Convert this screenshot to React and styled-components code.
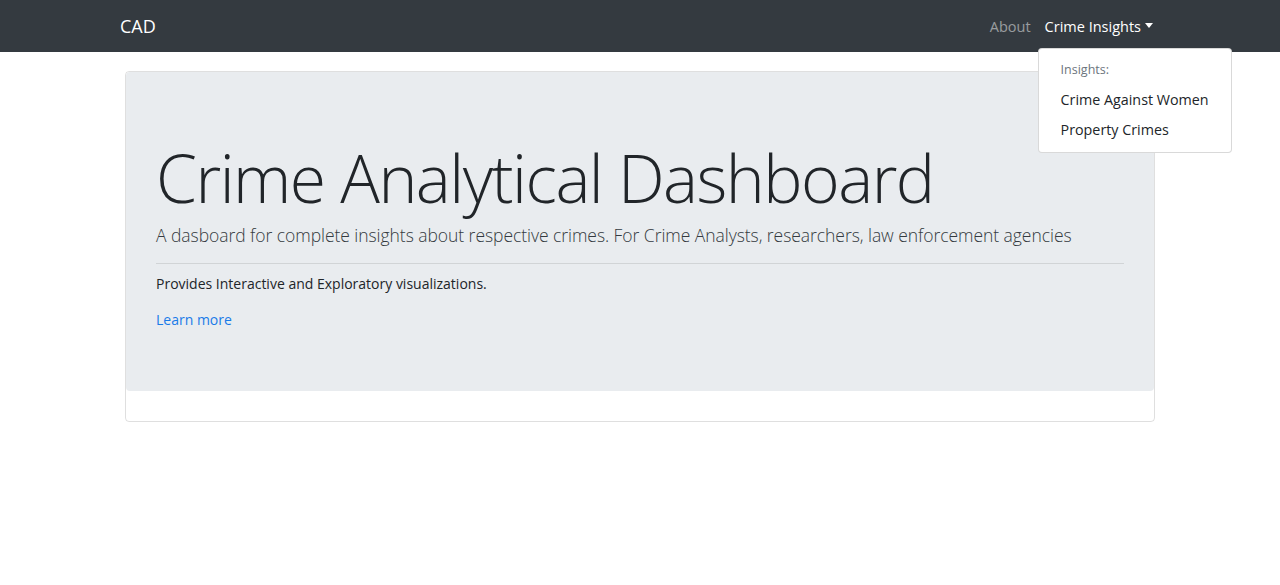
import React from "react";
import styled, { createGlobalStyle } from "styled-components";

const Global = createGlobalStyle`
  body {
    margin: 0;
    background: #fff;
    font-family: "Open Sans", "Noto Sans", sans-serif;
    color: #212529;
  }
`;

const Navbar = styled.nav`
  height: 52px;
  background: #343a40;
  display: flex;
  align-items: center;
  justify-content: space-between;
  padding: 0 120px;
`;

const Brand = styled.a`
  color: #fff;
  font-size: 18px;
  text-decoration: none;
`;

const NavList = styled.ul`
  display: flex;
  list-style: none;
  margin: 0;
  padding: 0;
`;

const NavItem = styled.li`
  position: relative;
`;

const NavLink = styled.a`
  display: flex;
  align-items: center;
  height: 36px;
  padding: 0 7px;
  font-size: 14.5px;
  color: ${(p) => (p.$active ? "#fff" : "rgba(255,255,255,.5)")};
  text-decoration: none;
`;

const Caret = styled.span`
  margin-left: 4px;
  border-top: 5px solid #fff;
  border-left: 4.5px solid transparent;
  border-right: 4.5px solid transparent;
  margin-top: -2px;
`;

const Menu = styled.div`
  position: absolute;
  top: 40px;
  left: 0;
  width: 194px;
  box-sizing: border-box;
  background: #fff;
  border: 1px solid rgba(0,0,0,.15);
  border-radius: 4px;
  padding: 7px 0;
  z-index: 10;
`;

const MenuHeader = styled.div`
  padding: 5px 22px 6px;
  line-height: 18px;
  font-size: 12.5px;
  color: #6c757d;
`;

const MenuItem = styled.a`
  display: block;
  padding: 5px 22px;
  line-height: 20px;
  font-size: 14.3px;
  white-space: nowrap;
  color: #212529;
  text-decoration: none;
`;

const Container = styled.main`
  width: 1030px;
  margin: 19px auto 0;
`;

const Card = styled.div`
  border: 1px solid rgba(0,0,0,.125);
  border-radius: 4px;
  padding-bottom: 30px;
`;

const Jumbotron = styled.section`
  background: #e9ecef;
  border-radius: 4px;
  padding: 69px 30px 61px;
`;

const Title = styled.h1`
  margin: 0 0 9px;
  font-size: 66px;
  font-weight: 300;
  line-height: 1.1;
  letter-spacing: -1.5px;
`;

const Lead = styled.p`
  margin: 0 0 16px;
  font-size: 17.5px;
  font-weight: 300;
  letter-spacing: -0.05px;
  white-space: nowrap;
  color: #343a40;
`;

const Rule = styled.hr`
  margin: 0 0 10px;
  border: 0;
  border-top: 1px solid rgba(0,0,0,.1);
`;

const Text = styled.p`
  margin: 0 0 15px;
  font-size: 14px;
`;

const Link = styled.a`
  font-size: 14px;
  color: #1a7be8;
  text-decoration: none;
`;

export default function App() {
  return (
    <>
      <Global />
      <Navbar>
        <Brand href="#">CAD</Brand>
        <NavList>
          <NavItem>
            <NavLink href="#">About</NavLink>
          </NavItem>
          <NavItem>
            <NavLink href="#" $active>
              Crime Insights <Caret />
            </NavLink>
            <Menu>
              <MenuHeader>Insights:</MenuHeader>
              <MenuItem href="#">Crime Against Women</MenuItem>
              <MenuItem href="#">Property Crimes</MenuItem>
            </Menu>
          </NavItem>
        </NavList>
      </Navbar>
      <Container>
        <Card>
          <Jumbotron>
            <Title>Crime Analytical Dashboard</Title>
            <Lead>
              A dasboard for complete insights about respective crimes. For Crime Analysts, researchers, law enforcement agencies
            </Lead>
            <Rule />
            <Text>Provides Interactive and Exploratory visualizations.</Text>
            <Link href="#">Learn more</Link>
          </Jumbotron>
        </Card>
      </Container>
    </>
  );
}
